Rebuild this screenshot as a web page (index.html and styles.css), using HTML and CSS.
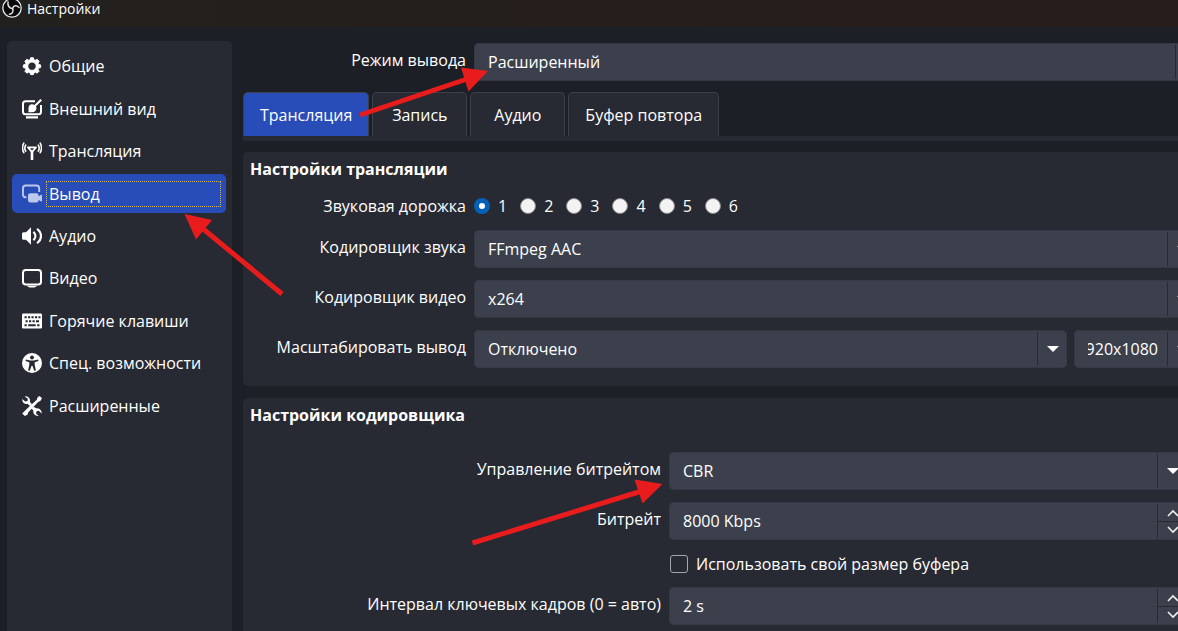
FILE: index.html
```html
<!DOCTYPE html>
<html lang="ru">
<head>
<meta charset="utf-8">
<title>Настройки</title>
<link rel="stylesheet" href="styles.css">
</head>
<body>
<header class="titlebar">
  <svg class="logo" viewBox="0 0 20 20" aria-hidden="true">
    <circle cx="10" cy="10" r="9.200" fill="#0a0a0a" stroke="#e8e8e8" stroke-width="1.300"/>
    <g fill="none" stroke="#dedede" stroke-width="1.500" stroke-linecap="round">
      <path d="M10.500 10.800C7.500 10 5.500 7.500 6 4"/>
      <path d="M10.500 10.500C11.500 7.500 14.500 6.800 17 9.500"/>
      <path d="M10.500 10.500C12 13 10.500 15.800 7.500 16.300"/>
    </g>
  </svg>
  <h1 class="title">Настройки</h1>
</header>
<div class="window">
  <nav class="sidebar">
    <button class="nav-item">
      <svg class="icon" viewBox="0 0 20 20"><path fill="#fff" stroke="#fff" stroke-linejoin="round" fill-rule="evenodd" d="M8.600 1.800h2.800l.5 2 1.300.6 1.900-1.100 2 2-1.100 1.900.5 1.200 2.100.5v2.700l-2.100.5-.5 1.200 1.100 1.900-2 2-1.900-1.100-1.300.6-.5 1.900H8.600l-.5-1.900-1.300-.6-1.900 1.100-2-2L4 13.300l-.5-1.200-2.100-.5V8.900l2.100-.5L4 7.200 2.900 5.300l2-2 1.900 1.100 1.300-.6zM10 6a4.200 4.200 0 1 0 0 8.400A4.200 4.200 0 0 0 10 6z"/></svg>
      <span class="nav-text">Общие</span>
    </button>
    <button class="nav-item">
      <svg class="icon" viewBox="0 0 20 20"><path fill="none" stroke="#fff" stroke-width="2" d="M13 2.200H3.500Q1 2.200 1 4.700v8.100q0 2.500 2.500 2.500h13q2.500 0 2.500-2.500V6"/><path fill="#fff" d="M4 17.300h12v2.200H4zM10 5.200c1 0 1.900.3 2.500.8l5.800-6 1.700 1.500-6 5.800c.3.600.4 1.200.4 1.900 0 2.700-2 4-4.400 4H6.500c-.3 0-.4-.4 0-.6V9.200c0-2.500 1.500-4 3.500-4z"/></svg>
      <span class="nav-text">Внешний вид</span>
    </button>
    <button class="nav-item">
      <svg class="icon" viewBox="0 0 20 20"><g fill="none" stroke="#fff" stroke-linecap="round"><path stroke-width="2.600" stroke-linecap="butt" d="M10 10v9"/><path stroke-width="1.800" stroke-linejoin="round" d="M6 6.300h8L10 11z"/><path stroke-width="1.600" d="M3.700 4.200c-1.200 2-1.200 4 0 6M1.800 2.200c-1.600 3-1.600 6.500 0 9.500M16.300 4.200c1.200 2 1.200 4 0 6M18.200 2.200c1.600 3 1.600 6.500 0 9.500"/></g></svg>
      <span class="nav-text">Трансляция</span>
    </button>
    <button class="nav-item nav-item-active" aria-current="page">
      <svg class="icon" viewBox="0 0 20 20"><path fill="none" stroke="#bcc8ec" stroke-width="1.900" d="M17.200 8V4.200q0-2.700-2.700-2.700H3.700Q1 1.500 1 4.200v6.500q0 2.700 3.500 2.700"/><path fill="#bcc8ec" d="M8.500 9.300h6q2 0 2 2v.9l3.500-1.700v7.300L16.500 16v.5q0 2-2 2h-6q-2.500 0-2.500-2v-5.200q0-2 2.500-2z"/></svg>
      <span class="nav-text">Вывод</span>
    </button>
    <button class="nav-item">
      <svg class="icon" viewBox="0 0 20 20"><path fill="#fff" d="M9 1.300v17.400L4 13.800H1.500Q0 13.800 0 12.300V7.700q0-1.500 1.500-1.500H4z"/><path fill="none" stroke="#fff" stroke-width="2.200" stroke-linecap="round" d="M12 6.500c1.800 2 1.800 5 0 7M15.700 3.300c4.400 3.400 4.400 10 0 13.400"/></svg>
      <span class="nav-text">Аудио</span>
    </button>
    <button class="nav-item">
      <svg class="icon" viewBox="0 0 20 20"><rect x="1" y="2" width="18" height="14.500" rx="2.800" fill="none" stroke="#fff" stroke-width="2"/><path fill="#fff" d="M5 17.800h10q-1 1.700-3 1.700H8q-2 0-3-1.700z"/></svg>
      <span class="nav-text">Видео</span>
    </button>
    <button class="nav-item">
      <svg class="icon" viewBox="0 0 20 20"><rect y="2.500" width="20" height="15" rx="1.200" fill="#fff"/><path stroke="#272a33" stroke-width="2" d="M2.500 6.300h2.200m1.300 0h2.200m1.300 0h2.200m1.300 0h2.200m1.300 0h2M3.500 10.200h2.200m1.300 0h2.200m1.300 0h2.200m1.300 0h3M2.500 14.200h2.200m1.500 0h7.500m1.500 0h2.300"/></svg>
      <span class="nav-text">Горячие клавиши</span>
    </button>
    <button class="nav-item">
      <svg class="icon" viewBox="0 0 20 20"><circle cx="10" cy="10" r="10" fill="#fff"/><circle cx="10" cy="4.600" r="2" fill="#272a33"/><path fill="#272a33" d="M3.800 6.500l4.500 1h3.400l4.500-1 .3 1.500-3.800 1.300v2.500l1.200 5.600-1.700.4-1.800-5h-.8l-1.800 5-1.700-.4 1.200-5.600V9.300L3.500 8z"/></svg>
      <span class="nav-text">Спец. возможности</span>
    </button>
    <button class="nav-item">
      <svg class="icon" viewBox="0 0 20 20"><path fill="#fff" d="M2.700.4Q5 0 6.900 1.700q1.600 1.700 1 4.200l2 2-2 2-2.200-2Q3.400 8.500 1.600 7 0 5.300.3 3l2.900 2.500 2.300-.5.3-2.200zM17.500 0L20 2.200l-1.700 2.900-2.200.9-10 10.500-.4 2-2.900 1.500L.2 17.400l4-4L15 3.400l.4-1.900zM11.900 10.800l2 1.500q2.400-.5 4.200 1.100Q20 15 19.600 17.500l-2.800-2.700-2.300.5-.4 2.400 2.600 2.200q-2.600.4-4.300-1.300-1.500-1.600-1-4.200l-1.700-1.700z"/></svg>
      <span class="nav-text">Расширенные</span>
    </button>
  </nav>
  <main class="content">
    <div class="form-row mode-row">
      <label class="label" for="mode">Режим вывода</label>
      <div class="combo">
        <select class="field" id="mode"><option>Расширенный</option></select>
        <span class="drop"><svg class="caret" viewBox="0 0 12 6"><path fill="#fff" d="M0 0h12L6 6z"/></svg></span>
      </div>
    </div>
    <div class="tabs" role="tablist">
      <button class="tab tab-active" role="tab" aria-selected="true">Трансляция</button>
      <button class="tab" role="tab">Запись</button>
      <button class="tab" role="tab">Аудио</button>
      <button class="tab" role="tab">Буфер повтора</button>
    </div>
    <section class="panel">
      <h2 class="heading">Настройки трансляции</h2>
      <div class="form">
        <div class="form-row">
          <span class="label-plain" id="track">Звуковая дорожка</span>
          <div class="radios" role="radiogroup" aria-labelledby="track">
            <label class="choice"><input class="radio" type="radio" name="track" checked>1</label>
            <label class="choice"><input class="radio" type="radio" name="track">2</label>
            <label class="choice"><input class="radio" type="radio" name="track">3</label>
            <label class="choice"><input class="radio" type="radio" name="track">4</label>
            <label class="choice"><input class="radio" type="radio" name="track">5</label>
            <label class="choice"><input class="radio" type="radio" name="track">6</label>
          </div>
        </div>
        <div class="form-row">
          <label class="label" for="acodec">Кодировщик звука</label>
          <div class="combo">
            <select class="field" id="acodec"><option>FFmpeg AAC</option></select>
            <span class="drop"><svg class="caret" viewBox="0 0 12 6"><path fill="#fff" d="M0 0h12L6 6z"/></svg></span>
          </div>
        </div>
        <div class="form-row">
          <label class="label" for="vcodec">Кодировщик видео</label>
          <div class="combo">
            <select class="field" id="vcodec"><option>x264</option></select>
            <span class="drop"><svg class="caret" viewBox="0 0 12 6"><path fill="#fff" d="M0 0h12L6 6z"/></svg></span>
          </div>
        </div>
        <div class="form-row">
          <label class="label" for="scale">Масштабировать вывод</label>
          <div class="pair">
            <div class="combo">
              <select class="field" id="scale"><option>Отключено</option></select>
              <span class="drop"><svg class="caret" viewBox="0 0 12 6"><path fill="#fff" d="M0 0h12L6 6z"/></svg></span>
            </div>
            <div class="combo combo-size">
              <input class="field field-size" type="text" value="1920x1080" aria-label="Разрешение">
              <span class="drop"><svg class="caret" viewBox="0 0 12 6"><path fill="#fff" d="M0 0h12L6 6z"/></svg></span>
            </div>
          </div>
        </div>
      </div>
    </section>
    <section class="panel panel-encoder">
      <h2 class="heading">Настройки кодировщика</h2>
      <div class="form form-encoder">
        <div class="form-row">
          <label class="label" for="rate">Управление битрейтом</label>
          <div class="combo">
            <select class="field" id="rate"><option>CBR</option></select>
            <span class="drop"><svg class="caret" viewBox="0 0 12 6"><path fill="#fff" d="M0 0h12L6 6z"/></svg></span>
          </div>
        </div>
        <div class="form-row">
          <label class="label" for="bitrate">Битрейт</label>
          <div class="combo">
            <input class="field" id="bitrate" type="text" value="8000 Kbps">
            <span class="spin">
              <button class="step" aria-label="Больше"><svg class="chevron" viewBox="0 0 12 8"><path d="M1 7l5-5 5 5"/></svg></button>
              <button class="step" aria-label="Меньше"><svg class="chevron" viewBox="0 0 12 8"><path d="M1 1l5 5 5-5"/></svg></button>
            </span>
          </div>
        </div>
        <div class="form-row">
          <span></span>
          <label class="choice"><input class="check" type="checkbox">Использовать свой размер буфера</label>
        </div>
        <div class="form-row">
          <label class="label" for="keyint">Интервал ключевых кадров (0 = авто)</label>
          <div class="combo">
            <input class="field" id="keyint" type="text" value="2 s">
            <span class="spin">
              <button class="step" aria-label="Больше"><svg class="chevron" viewBox="0 0 12 8"><path d="M1 7l5-5 5 5"/></svg></button>
              <button class="step" aria-label="Меньше"><svg class="chevron" viewBox="0 0 12 8"><path d="M1 1l5 5 5-5"/></svg></button>
            </span>
          </div>
        </div>
      </div>
    </section>
  </main>
</div>
<svg class="arrows" width="1178" height="631" viewBox="0 0 1178 631" aria-hidden="true">
  <g stroke="#e81c1c" stroke-width="5">
    <path d="M360 115L467 79M282 294L202 228M472.500 543L642 491"/>
  </g>
  <path fill="#e81c1c" d="M488 71l-27-3.500 7.500 24zM184.500 214l27.500 6-16 19.500zM662.500 484l-28-4.500 8 24z"/>
</svg>
</body>
</html>
```

FILE: styles.css
```css
* {
  box-sizing: border-box;
}

body {
  margin: 0;
  height: 100vh;
  display: flex;
  flex-direction: column;
  overflow: hidden;
  background: #1d1f26;
  color: #fff;
  font: 16px/22px "Open Sans", "Noto Sans", sans-serif;
}

button,
input,
select {
  font: inherit;
  color: inherit;
  margin: 0;
}

.titlebar {
  flex: none;
  display: flex;
  align-items: flex-start;
  gap: 5px;
  height: 27px;
  padding-left: 2px;
  background: linear-gradient(90deg, #22201e, #261e1a 60%, #271d1a);
}

.logo {
  width: 20px;
  height: 20px;
  margin-top: -2px;
}

.title {
  margin: 0;
  font-size: 14px;
  line-height: 18px;
  font-weight: 400;
}

.window {
  flex: 1;
  min-height: 0;
  display: flex;
  gap: 11px;
  padding: 14px 0 0 7px;
}

.sidebar {
  flex: none;
  width: 225px;
  padding: 6px 6px 206px 5px;
  border-radius: 5px 5px 0 0;
  background: #272a33;
  display: grid;
  grid-template-rows: repeat(9, 1fr);
  gap: 4px;
}

.nav-item {
  display: flex;
  align-items: center;
  gap: 4px;
  padding: 0 5px 0 10px;
  border: 0;
  border-radius: 5px;
  background: none;
  text-align: left;
}

.nav-item-active {
  background: #284cb8;
}

.icon {
  flex: none;
  width: 20px;
  height: 20px;
}

.nav-text {
  flex: 1;
  padding: 1px 2px;
  border: 1px solid transparent;
  white-space: nowrap;
}

.nav-item-active .nav-text {
  border: 1px dotted #d7b75c;
}

.content {
  flex: 1;
  min-width: 0;
  margin: 2px -27px 0 0;
  display: flex;
  flex-direction: column;
}

.form-row {
  display: grid;
  grid-template-columns: 223px minmax(0, 1fr);
  gap: 8px;
  align-items: center;
}

.label {
  padding-bottom: 4px;
  text-align: right;
  white-space: nowrap;
}

.label-plain {
  text-align: right;
}

.combo {
  position: relative;
  flex: 1;
  min-width: 0;
  height: 38px;
  border-radius: 5px;
  background: #3c404d;
}

.field {
  appearance: none;
  display: block;
  width: 100%;
  height: 38px;
  padding: 0 38px 0 13px;
  border: 1px solid #353945;
  border-radius: 5px;
  background: none;
  outline: 0;
}

.field-size {
  direction: rtl;
}

.combo-size {
  flex: 0 0 123px;
}

.drop,
.spin {
  position: absolute;
  top: 2px;
  right: 0;
  bottom: 2px;
  width: 30px;
  border-left: 1px solid #272a33;
  pointer-events: none;
}

.drop {
  display: grid;
  place-items: center;
}

.caret {
  width: 12px;
  height: 6px;
}

.spin {
  display: grid;
  grid-template-rows: 1fr 1fr;
}

.step {
  display: grid;
  place-items: center;
  padding: 0;
  border: 0;
  background: none;
}

.step + .step {
  border-top: 1px solid #272a33;
}

.chevron {
  width: 12px;
  height: 8px;
  fill: none;
  stroke: #eee;
  stroke-width: 1.6px;
}

.tabs {
  flex: none;
  display: flex;
  gap: 3px;
  margin: 11px 0;
  border-bottom: 5px solid #272a33;
}

.tab {
  height: 44px;
  min-width: 95px;
  padding: 0 16px;
  border: 1px solid #3c404d;
  border-bottom: 0;
  border-radius: 5px 5px 0 0;
  background: #272a33;
}

.tab-active {
  background: #284cb8;
}

.panel {
  flex: none;
  padding: 6px 8px 18px 0;
  border-radius: 5px;
  background: #272a33;
}

.panel-encoder {
  flex: 1 0 auto;
  margin-top: 12px;
  padding-right: 18px;
}

.heading {
  margin: 0 0 14px;
  padding-left: 7px;
  font-size: 16px;
  line-height: 22px;
  font-weight: 700;
}

.form {
  display: grid;
  gap: 12px;
}

.form-encoder {
  padding-top: 12px;
}

.form-encoder .form-row {
  grid-template-columns: 418px minmax(0, 1fr);
}

.pair {
  display: flex;
  gap: 7px;
}

.radios {
  display: flex;
  gap: 13px;
  height: 24px;
}

.choice {
  display: flex;
  align-items: center;
  gap: 8px;
  height: 23px;
}

.radio {
  appearance: none;
  width: 16px;
  height: 16px;
  border: 1px solid #8a8a8a;
  border-radius: 50%;
  background: #f3f3f3;
}

.radio:checked {
  border: 5px solid #0560b8;
  background: #fff;
}

.check {
  appearance: none;
  width: 18px;
  height: 18px;
  margin-left: 1px;
  border: 1px solid #a5a6aa;
  border-radius: 3px;
}

.arrows {
  position: absolute;
  top: 0;
  left: 0;
  pointer-events: none;
}
```
